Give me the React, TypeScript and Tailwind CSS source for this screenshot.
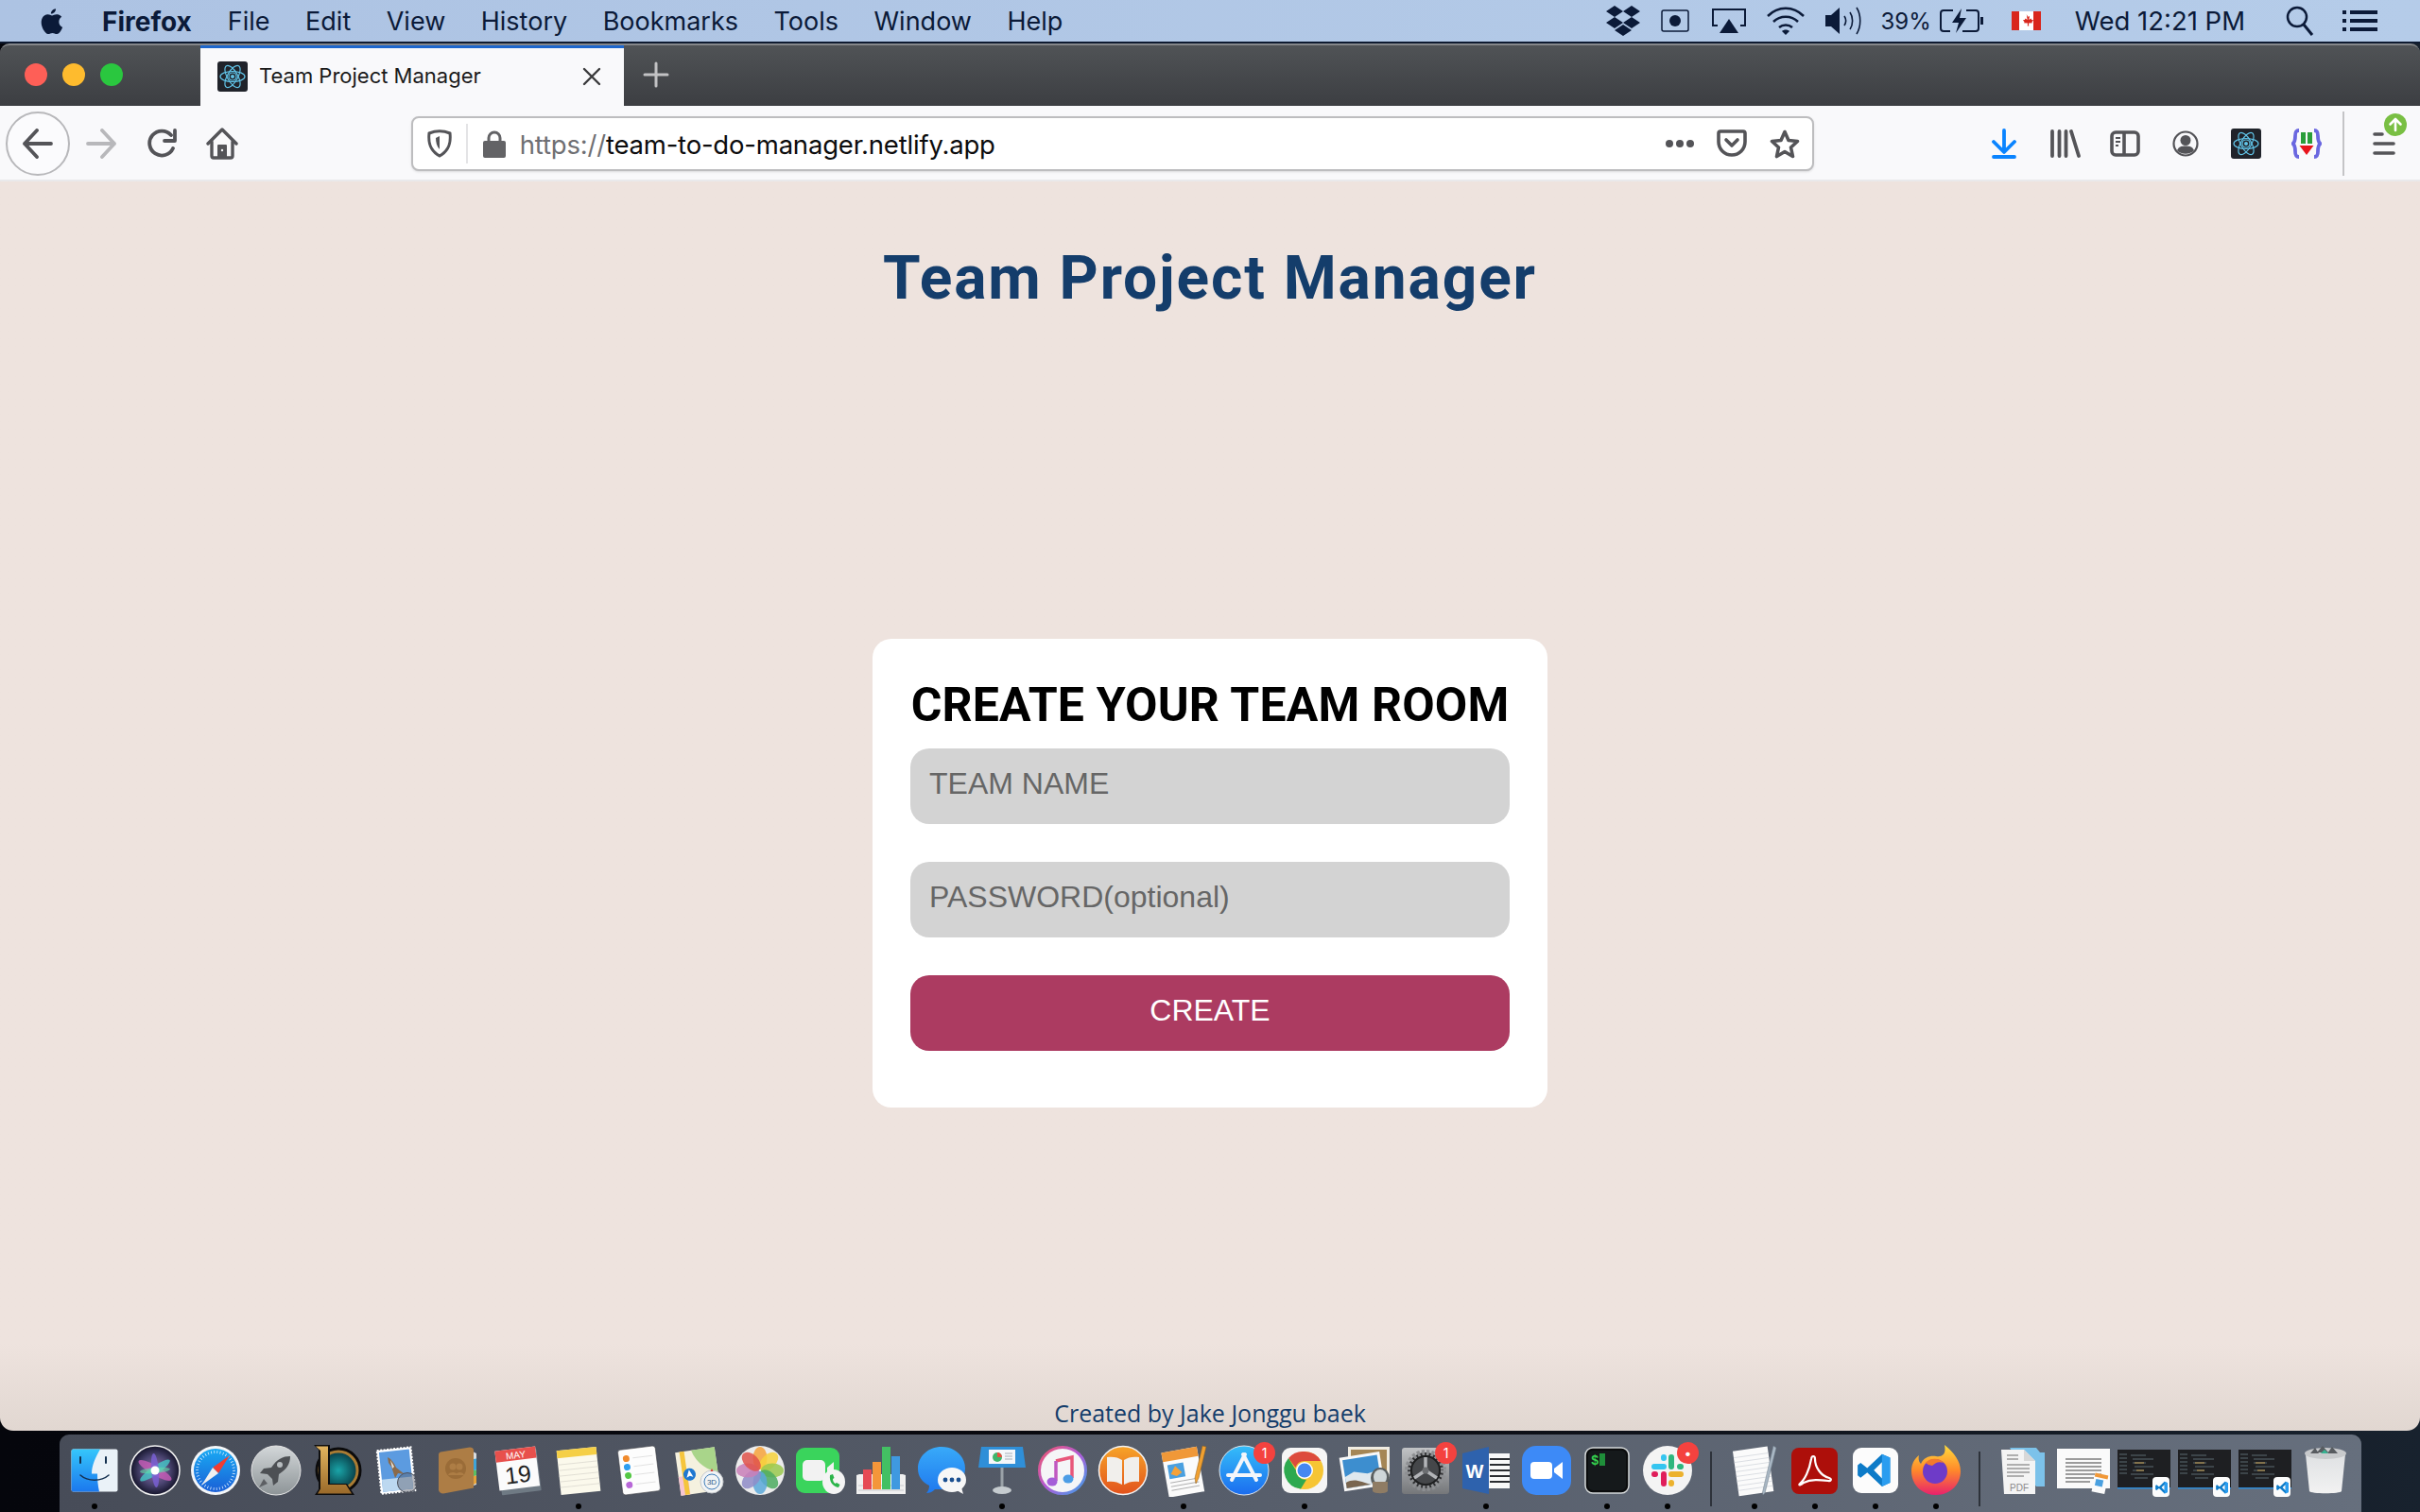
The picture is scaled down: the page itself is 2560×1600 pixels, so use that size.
import type { ReactNode } from "react";

// ---- menu bar icons ----
const Apple = () => (
  <svg width="27" height="31" viewBox="0 0 24 28" fill="#0b1a38">
    <path d="M17 2c.2 2.500-2 5-4.600 4.800C12.100 4.400 14.500 2.100 17 2zM20 14.500c0-2.600 1.700-4 2.600-4.700-1.500-2-3.600-2.400-4.500-2.400-1.900-.2-3.700 1.100-4.700 1.100-1 0-2.500-1.100-4.100-1-2.100 0-4 1.200-5.100 3.100-2.200 3.800-.6 9.400 1.600 12.500 1 1.500 2.300 3.200 3.900 3.100 1.600-.1 2.200-1 4.100-1s2.400 1 4.100 1c1.700 0 2.800-1.500 3.800-3 1.200-1.700 1.700-3.400 1.700-3.500-.1 0-3.400-1.300-3.400-5.200z" />
  </svg>
);

const MenuIcons = {
  dropbox: (
    <svg width="38" height="32" viewBox="0 0 38 32" fill="#0b1a38">
      <path d="M10 0l9 6-9 6-9-6zM28 0l9 6-9 6-9-6zM10 12l9 6-9 6-9-6zM28 12l9 6-9 6-9-6zM19 20l9 6-9 6-9-6z" />
    </svg>
  ),
  record: (
    <svg width="30" height="24" viewBox="0 0 30 24">
      <rect x="1" y="1" width="28" height="22" rx="2" fill="none" stroke="#0b1a38" strokeWidth="1.500" />
      <circle cx="15" cy="12" r="6" fill="#0b1a38" />
    </svg>
  ),
  airplay: (
    <svg width="38" height="28" viewBox="0 0 38 28" fill="none" stroke="#0b1a38" strokeWidth="2">
      <path d="M7 19H2V2h34v17h-5" />
      <path d="M19 12l10 15H9z" fill="#0b1a38" stroke="none" />
    </svg>
  ),
  wifi: (
    <svg width="42" height="32" viewBox="0 0 42 32" fill="none" stroke="#0b1a38" strokeWidth="2.500">
      <path d="M2 11c11-11 27-11 38 0M8 17c7-7 19-7 26 0M14 23c4-3.500 10-3.500 14 0" />
      <path d="M21 31l-4-4c2-2 6-2 8 0z" fill="#0b1a38" stroke="none" />
    </svg>
  ),
  volume: (
    <svg width="42" height="30" viewBox="0 0 42 30" fill="none" stroke="#0b1a38" strokeWidth="1.600">
      <path d="M1 9h6l9-8v28l-9-8H1z" fill="#0b1a38" stroke="none" />
      <path d="M21 10c2 3 2 7 0 10M27 6c3.500 5 3.500 13 0 18M34 1c5 8 5 20 0 28" />
    </svg>
  ),
  battery: (
    <svg width="46" height="26" viewBox="0 0 46 26" fill="none" stroke="#0b1a38" strokeWidth="2">
      <path d="M14 2H4a3 3 0 0 0-3 3v16a3 3 0 0 0 3 3h7M28 2h10a3 3 0 0 1 3 3v16a3 3 0 0 1-3 3H24" />
      <path d="M23 0L13 15h7l-3 11 11-16h-7z" fill="#0b1a38" stroke="none" />
      <rect x="43" y="9" width="3" height="8" fill="#0b1a38" stroke="none" />
    </svg>
  ),
  flag: (
    <svg width="31" height="20" viewBox="0 0 31 20">
      <rect width="31" height="20" fill="#fff" />
      <rect width="8" height="20" fill="#d9261c" />
      <rect x="23" width="8" height="20" fill="#d9261c" />
      <path d="M15.500 3l1.500 3 2-1-.7 4 2.200-1.500.6 1.500 2 .2-1.700 2 .6 1-4 .3.200 3h-1.400l.2-3-4-.3.600-1-1.700-2 2-.2.600-1.500 2.200 1.500-.7-4 2 1z" fill="#d9261c" />
    </svg>
  ),
  search: (
    <svg width="30" height="32" viewBox="0 0 30 32" fill="none" stroke="#0b1a38" strokeWidth="2.500">
      <circle cx="12" cy="12" r="10" />
      <path d="M19 20l9 11" strokeWidth="3" />
    </svg>
  ),
  list: (
    <svg width="37" height="24" viewBox="0 0 37 24" fill="#0b1a38">
      <rect y="1" width="4" height="4" /><rect x="8" y="1" width="29" height="4" />
      <rect y="10" width="4" height="4" /><rect x="8" y="10" width="29" height="4" />
      <rect y="19" width="4" height="4" /><rect x="8" y="19" width="29" height="4" />
    </svg>
  ),
};

// ---- favicon shared by tab and toolbar ----
const ReactLogo = ({ size }: { size: number }) => (
  <svg width={size} height={size} viewBox="0 0 32 32">
    <rect width="32" height="32" rx="3" fill="#20232a" />
    <g fill="none" stroke="#61c4e8" strokeWidth="1.200">
      <ellipse cx="16" cy="16" rx="13" ry="5.500" />
      <ellipse cx="16" cy="16" rx="13" ry="5.500" transform="rotate(60 16 16)" />
      <ellipse cx="16" cy="16" rx="13" ry="5.500" transform="rotate(120 16 16)" />
      <circle cx="16" cy="16" r="4" />
    </g>
    <circle cx="16" cy="16" r="2" fill="#61c4e8" />
  </svg>
);

// ---- toolbar icons ----
const ink = "#545458";
const Back = () => (
  <svg width="32" height="32" viewBox="0 0 32 32" fill="none" stroke={ink} strokeWidth="3.800" strokeLinecap="round" strokeLinejoin="round">
    <path d="M30 16H2M15 2L2 16l13 14" />
  </svg>
);
const Forward = () => (
  <svg width="32" height="32" viewBox="0 0 32 32" fill="none" stroke="#b8b8bb" strokeWidth="3.800" strokeLinecap="round" strokeLinejoin="round">
    <path d="M2 16h28M17 2l13 14-13 14" />
  </svg>
);
const Reload = () => (
  <svg width="32" height="32" viewBox="0 0 32 32" fill="none" stroke={ink} strokeWidth="3.800" strokeLinecap="round">
    <path d="M27 21a13 13 0 1 1-2-14" />
    <path d="M29 2v11H18" strokeLinejoin="round" />
  </svg>
);
const Home = () => (
  <svg width="34" height="34" viewBox="0 0 34 34" fill="none" stroke={ink} strokeWidth="3.400" strokeLinecap="round" strokeLinejoin="round">
    <path d="M2 17L17 2l15 15" />
    <path d="M6 15v15a2 2 0 0 0 2 2h18a2 2 0 0 0 2-2V15" />
    <rect x="12" y="18" width="10" height="14" rx="1" fill={ink} stroke="none" />
    <circle cx="17" cy="24" r="1.200" fill="#f9f9fb" stroke="none" />
  </svg>
);
const Shield = () => (
  <svg width="26" height="30" viewBox="0 0 26 30" fill="none" stroke={ink} strokeWidth="3">
    <path d="M2 4c7-3 15-3 22 0 1 9 0 18-11 24C2 22 1 13 2 4z" />
    <path d="M13 7v14c-3-3-4-8-4-12z" fill={ink} stroke="none" />
  </svg>
);
const Lock = () => (
  <svg width="24" height="29" viewBox="0 0 24 29" fill="#636366">
    <path d="M6 12V8a6 6 0 0 1 12 0v4" fill="none" stroke="#636366" strokeWidth="3" />
    <rect y="11" width="24" height="18" rx="2" />
  </svg>
);
const Pocket = () => (
  <svg width="32" height="30" viewBox="0 0 32 30" fill="none" stroke={ink} strokeWidth="3.600" strokeLinecap="round" strokeLinejoin="round">
    <path d="M4 2h24a2 2 0 0 1 2 2v9a14 14 0 0 1-28 0V4a2 2 0 0 1 2-2z" />
    <path d="M10 11l6 6 6-6" />
  </svg>
);
const Star = () => (
  <svg width="32" height="31" viewBox="0 0 32 31" fill="none" stroke={ink} strokeWidth="3.600" strokeLinejoin="round">
    <path d="M16 2.500l4 9 9.500 1-7 6.500 2 9.500-8.500-5-8.500 5 2-9.500-7-6.500 9.500-1z" />
  </svg>
);
const Download = () => (
  <svg width="26" height="32" viewBox="0 0 26 32" fill="none" stroke="#0a84ff" strokeWidth="3.800" strokeLinecap="round" strokeLinejoin="round">
    <path d="M13 2v22M2 14l11 11 11-11M2 30h22" />
  </svg>
);
const Library = () => (
  <svg width="32" height="30" viewBox="0 0 32 30" fill="none" stroke={ink} strokeWidth="3.800" strokeLinecap="round">
    <path d="M2 2v26M9.500 2v26M16.500 2v26M22 2l8 26" />
  </svg>
);
const Sidebar = () => (
  <svg width="32" height="28" viewBox="0 0 32 28" fill="none" stroke={ink} strokeWidth="3.600">
    <rect x="2" y="2" width="28" height="24" rx="4" />
    <path d="M15 2v24" />
    <path d="M6 8h5M6 12h5M6 16h3" strokeWidth="2" />
  </svg>
);
const Account = () => (
  <svg width="28" height="28" viewBox="0 0 28 28" fill={ink}>
    <circle cx="14" cy="14" r="12.500" fill="none" stroke={ink} strokeWidth="2.200" />
    <circle cx="14" cy="10.500" r="5.500" />
    <path d="M5 21c2-4 5-4.500 9-4.500s7 .5 9 4.500c-4 5-14 5-18 0z" />
  </svg>
);
const BracesExt = () => (
  <svg width="32" height="32" viewBox="0 0 32 32">
    <path d="M8 2C4 2 4 5 4 8s0 6-2.500 8c2.500 2 2.500 5 2.500 8s0 6 4 6M24 2c4 0 4 3 4 6s0 6 2.500 8c-2.500 2-2.500 5-2.500 8s0 6-4 6" fill="none" stroke="#6a67e0" strokeWidth="3.800" />
    <rect x="10" y="4" width="5" height="12" fill="#2a9d3a" />
    <rect x="17" y="4" width="5" height="12" fill="#2a9d3a" />
    <path d="M8.500 18h15l-7.500 10z" fill="#e8141c" />
  </svg>
);
const Hamburger = () => (
  <svg width="24" height="26" viewBox="0 0 24 26" fill="none" stroke={ink} strokeWidth="3.600" strokeLinecap="round">
    <path d="M2 3h8M2 13h20M2 23h20" />
  </svg>
);

// ---- dock icons, all drawn on a 56 box ----
const Box = ({ children }: { children: ReactNode }) => (
  <svg width="56" height="56" viewBox="0 0 56 56">{children}</svg>
);

const Finder = () => (
  <Box>
    <defs>
      <linearGradient id="fnd" x1="0" y1="0" x2="0" y2="1"><stop offset="0" stopColor="#35c6fb" /><stop offset="1" stopColor="#1b78ee" /></linearGradient>
    </defs>
    <rect x="3.500" y="5.500" width="49" height="45" rx="2" fill="#eaf2f8" />
    <path d="M5.500 5.500H34c-5 9-9 17-9 26h6c0 6 .5 12 2 19H5.500a2 2 0 0 1-2-2v-41a2 2 0 0 1 2-2z" fill="url(#fnd)" />
    <path d="M13 14v6M40 14v6" stroke="#14304f" strokeWidth="2" strokeLinecap="round" />
    <path d="M13 33c8 7 22 7 30 0" fill="none" stroke="#14304f" strokeWidth="1.600" strokeLinecap="round" />
  </Box>
);
const Siri = () => (
  <Box>
    <defs>
      <radialGradient id="sir"><stop offset="0" stopColor="#9a6fb0" /><stop offset="0.600" stopColor="#4a4470" /><stop offset="1" stopColor="#14142a" /></radialGradient>
    </defs>
    <circle cx="28" cy="28" r="26" fill="url(#sir)" stroke="#f2f2f2" strokeWidth="1.500" />
    <ellipse cx="28" cy="28" rx="20" ry="5" fill="#c85cb8" fillOpacity="0.800" transform="rotate(30 28 28)" />
    <ellipse cx="28" cy="28" rx="19" ry="4.500" fill="#45c8c8" fillOpacity="0.800" transform="rotate(-35 28 28)" />
    <ellipse cx="28" cy="28" rx="18" ry="4" fill="#7a60d8" fillOpacity="0.800" transform="rotate(85 28 28)" />
    <ellipse cx="28" cy="28" rx="16" ry="3" fill="#5fe0a8" fillOpacity="0.600" transform="rotate(-5 28 28)" />
    <circle cx="28" cy="28" r="4.500" fill="#fff" />
  </Box>
);
const Safari = () => (
  <Box>
    <defs>
      <linearGradient id="saf" x1="0" y1="0" x2="0" y2="1"><stop offset="0" stopColor="#19aaf3" /><stop offset="1" stopColor="#1a5fd6" /></linearGradient>
    </defs>
    <circle cx="28" cy="28" r="26" fill="#f4f6f8" />
    <circle cx="28" cy="28" r="23" fill="url(#saf)" />
    <circle cx="28" cy="28" r="19.500" fill="none" stroke="#dbeeff" strokeWidth="3" strokeDasharray="0.800 2.400" />
    <path d="M43 12L31 31l-6-6z" fill="#f03c32" />
    <path d="M13 44l12-19 6 6z" fill="#f0f0f0" />
  </Box>
);
const Launchpad = () => (
  <Box>
    <defs>
      <linearGradient id="lpd" x1="0" y1="0" x2="0" y2="1"><stop offset="0" stopColor="#d3d7d9" /><stop offset="1" stopColor="#8d9497" /></linearGradient>
    </defs>
    <circle cx="28" cy="28" r="26" fill="url(#lpd)" stroke="#e6e6e6" />
    <path d="M43 13c-8 0-14 3-20 12l-8 1-4 5 8 1 5 5 1 7 5-4 1-8c8-5 12-11 12-19z" fill="#4d5054" />
    <circle cx="32" cy="22" r="3" fill="#b7bcbf" />
    <path d="M15 37l-5 9 9-4z" fill="#5c5f63" />
  </Box>
);
const Lol = () => (
  <Box>
    <defs>
      <radialGradient id="lol"><stop offset="0" stopColor="#1aa4a8" /><stop offset="1" stopColor="#06323c" /></radialGradient>
      <linearGradient id="lolg" x1="0" y1="0" x2="0" y2="1"><stop offset="0" stopColor="#e2b45e" /><stop offset="1" stopColor="#9b6a2a" /></linearGradient>
    </defs>
    <circle cx="30" cy="28" r="22" fill="url(#lol)" stroke="#0b0b0c" strokeWidth="5" />
    <circle cx="30" cy="28" r="20" fill="none" stroke="#a97c34" strokeWidth="3" />
    <path d="M4 1h17v41h18l8 12H5l4-6V6z" fill="#0e0e0f" />
    <path d="M6 2.500h13v40.500h19l6 9.500H8l3-5V7z" fill="url(#lolg)" />
  </Box>
);
const MailStamp = () => (
  <Box>
    <g transform="rotate(-6 28 28)">
      <rect x="9" y="5" width="36" height="46" fill="#fff" stroke="#fff" strokeWidth="2" strokeDasharray="2 1.500" />
      <rect x="11" y="7" width="32" height="42" fill="#5c9be0" />
      <rect x="11" y="36" width="32" height="13" fill="#bcd8f0" />
    </g>
    <path d="M18 14c4 2 7 6 9 11l9 7-7-1-3 5-4-12-3-4z" fill="#8a6a4a" />
    <path d="M21 17l4 7-2 2z" fill="#e9e2d6" />
    <circle cx="39" cy="41" r="10.500" fill="#5a606c" fillOpacity="0.450" stroke="#4c515c" />
  </Box>
);
const Contacts = () => (
  <Box>
    <path d="M44 8l4 2v33l-3 1z" fill="#d8dce0" />
    <path d="M45 16l3-.5v6l-3 .5zM45 22l3-.5v6l-3 .5z" fill="#3fa4d8" />
    <path d="M45 28l3-.5v6l-3 .5z" fill="#5bbf63" />
    <path d="M45 34l3-.5v8l-3 1.500z" fill="#e5a23a" />
    <path d="M8 11c0-1 1-2 2-2.500l31-5c2 0 4 1 4 3v40l-32 6c-3 0-5-2-5-4z" fill="#ad7d45" />
    <circle cx="26" cy="26" r="11" fill="#9a6c38" />
    <circle cx="23" cy="24" r="3.500" fill="#ad7d45" /><circle cx="30" cy="24" r="3.500" fill="#ad7d45" />
    <path d="M18 33c1-4 9-4 10 0zM26 33c1-4 8-4 9 0z" fill="#ad7d45" />
  </Box>
);
const Calendar = () => (
  <Box>
    <g transform="rotate(-7 28 28)">
      <rect x="8" y="8" width="42" height="44" rx="1" fill="#6f7a84" />
      <rect x="6" y="5" width="43" height="42" fill="#fbfbfb" />
      <rect x="6" y="5" width="43" height="12" fill="#e8504c" />
      <text x="27.500" y="15" textAnchor="middle" fontFamily="'Liberation Sans', sans-serif" fontSize="10" fill="#fff">MAY</text>
      <text x="27.500" y="41" textAnchor="middle" fontFamily="'Liberation Sans', sans-serif" fontSize="25" fill="#222">19</text>
    </g>
  </Box>
);
const Notes = () => (
  <Box>
    <g transform="rotate(-6 28 28)">
      <rect x="7" y="5" width="42" height="47" fill="#fbf9ec" />
      <rect x="7" y="5" width="42" height="8" fill="#f5cf46" />
      <path d="M7 20h42M7 26h42M7 32h42M7 38h42M7 44h42" stroke="#dcdad0" strokeWidth="0.800" />
    </g>
  </Box>
);
const Reminders = () => (
  <Box>
    <g transform="rotate(-7 28 28)">
      <rect x="8" y="4" width="40" height="48" rx="3" fill="#fdfdfd" stroke="#3f4248" strokeWidth="0.600" />
      <circle cx="16" cy="14" r="3.500" fill="#f08a2c" /><circle cx="16" cy="23" r="3.500" fill="#2d9ef0" />
      <circle cx="16" cy="32" r="3.500" fill="#55c845" /><circle cx="16" cy="42" r="3.500" fill="#b868d8" />
      <path d="M23 14h21M23 23h21M23 32h21M23 42h21" stroke="#e2e2e2" />
    </g>
  </Box>
);
const Maps = () => (
  <Box>
    <g transform="rotate(-8 26 28)">
      <rect x="5" y="6" width="42" height="46" fill="#f5f1df" />
      <path d="M22 6h25v26C38 30 26 22 22 6z" fill="#a9d58a" />
      <path d="M5 32h10v20H5z" fill="#f7c6d1" />
      <path d="M12 6v46" stroke="#f5c53c" strokeWidth="5" />
      <circle cx="17" cy="31" r="6.500" fill="#1f78d1" />
      <path d="M17 26l3.500 8-3.500-1.500-3.500 1.500z" fill="#fff" />
    </g>
    <circle cx="41" cy="40" r="12" fill="#f2f4f5" stroke="#c4c8cc" />
    <circle cx="41" cy="40" r="8" fill="none" stroke="#3e7cb8" />
    <text x="41" y="43" textAnchor="middle" fontFamily="'Liberation Sans', sans-serif" fontSize="8" fill="#2f5d8a">3D</text>
    <path d="M41 26l1.500 3h-3z" fill="#d9362e" />
  </Box>
);
const Photos = () => {
  const petals = ["#f7a33c", "#f7d23c", "#9ac94e", "#4cab60", "#5ba8d9", "#8f8cc8", "#c97fb8", "#e0524a"];
  return (
    <Box>
      <circle cx="28" cy="28" r="26" fill="#ececec" />
      {petals.map((c, i) => (
        <ellipse key={c} cx="28" cy="15" rx="7.500" ry="12" fill={c} fillOpacity="0.850" transform={`rotate(${i * 45} 28 28)`} />
      ))}
    </Box>
  );
};
const FaceTime = () => (
  <Box>
    <rect x="2" y="4" width="46" height="48" rx="9" fill="#3ad45c" />
    <rect x="9" y="17" width="24" height="22" rx="5" fill="#f2f2f2" />
    <path d="M35 25l7-6v18l-7-6z" fill="#f2f2f2" />
    <ellipse cx="42" cy="40" rx="12" ry="13" fill="#f4f4f4" />
    <path d="M38 33c-1 7 3 12 9 13l1.500-3-3.500-2-1.500 1c-1.500-1-2.500-3-2.500-5l1.500-1-1.500-4z" fill="#2bb54a" />
  </Box>
);
const Numbers = () => (
  <Box>
    <path d="M2 33l3-1h46l3 1v20H2z" fill="#f0f0f0" />
    <path d="M4 44h48M4 49h48" stroke="#b0b4b8" strokeWidth="0.600" />
    <rect x="9" y="27" width="9" height="21" fill="#e64a55" />
    <rect x="19" y="19" width="9" height="29" fill="#f4963a" />
    <rect x="29" y="3" width="9" height="45" fill="#43c063" />
    <rect x="39" y="13" width="9" height="35" fill="#3f99e0" />
  </Box>
);
const Messages = () => (
  <Box>
    <defs>
      <linearGradient id="msg" x1="0" y1="0" x2="0" y2="1"><stop offset="0" stopColor="#38aaf9" /><stop offset="1" stopColor="#1f78ee" /></linearGradient>
    </defs>
    <path d="M28 3c14 0 25 10 25 23s-11 22-25 22c-3 0-5 0-7 0-3 3-6 4-9 4 2-2 3-5 3-8C7 40 3 34 3 26 3 13 14 3 28 3z" fill="url(#msg)" />
    <ellipse cx="39" cy="38" rx="15" ry="13" fill="#f7f7f7" />
    <path d="M44 49l7 4-2-7z" fill="#f7f7f7" />
    <circle cx="32" cy="38" r="2.400" fill="#1a4f90" /><circle cx="39" cy="38" r="2.400" fill="#1a4f90" /><circle cx="46" cy="38" r="2.400" fill="#1a4f90" />
  </Box>
);
const Keynote = () => (
  <Box>
    <path d="M6 3h44l3 22H3z" fill="#2f8fd8" />
    <rect x="14" y="6" width="28" height="15" fill="#f5f7fa" />
    <circle cx="23" cy="14" r="5" fill="#3fb56c" />
    <path d="M23 14V9a5 5 0 0 1 5 5z" fill="#e8503f" />
    <path d="M31 10h8M31 13h8M31 16h8" stroke="#a4adb5" />
    <rect x="26.500" y="25" width="3" height="22" fill="#9aa2a8" />
    <ellipse cx="28" cy="49" rx="10" ry="4" fill="#c5cbcf" />
  </Box>
);
const Itunes = () => (
  <Box>
    <defs>
      <linearGradient id="itn" x1="0" y1="0" x2="1" y2="1"><stop offset="0" stopColor="#f2566b" /><stop offset="0.500" stopColor="#b25ad8" /><stop offset="1" stopColor="#39a4ea" /></linearGradient>
    </defs>
    <circle cx="28" cy="28" r="24.500" fill="#f5f5f7" stroke="url(#itn)" strokeWidth="3" />
    <path d="M21 18l17-4v22" fill="none" stroke="#e8567a" strokeWidth="3.500" />
    <path d="M21 18v21" fill="none" stroke="#c058c0" strokeWidth="3.500" />
    <ellipse cx="17" cy="40" rx="5.500" ry="4.500" fill="#a45ed8" />
    <ellipse cx="34" cy="37" rx="5.500" ry="4.500" fill="#4c9de6" />
  </Box>
);
const Books = () => (
  <Box>
    <defs>
      <linearGradient id="bks" x1="0" y1="0" x2="0" y2="1"><stop offset="0" stopColor="#f7a428" /><stop offset="1" stopColor="#e2521c" /></linearGradient>
    </defs>
    <circle cx="28" cy="28" r="25.500" fill="url(#bks)" stroke="#f4f4f4" strokeWidth="1.500" />
    <path d="M27 17c-4-3-10-4-16-3v26c6-1 11 0 16 3zM29 17c4-3 10-4 16-3v26c-6-1-11 0-16 3z" fill="#f1efec" />
  </Box>
);
const Pages = () => (
  <Box>
    <g transform="rotate(-10 26 28)">
      <rect x="8" y="6" width="38" height="48" fill="#fbfbfb" />
      <rect x="8" y="6" width="38" height="10" fill="#f09838" />
      <rect x="12" y="20" width="17" height="15" fill="#4aa0e0" />
      <path d="M20 22l6 8-6 3-6-3z" fill="#f4a23a" />
      <path d="M12 39h30M12 43h30M12 47h30" stroke="#b0b0b0" />
    </g>
    <path d="M52 3l-8 33-3 6-1-6 8-34z" fill="#f0a030" stroke="#8a5c1c" strokeWidth="0.500" />
  </Box>
);
const AppStore = () => (
  <Box>
    <defs>
      <linearGradient id="aps" x1="0" y1="0" x2="0" y2="1"><stop offset="0" stopColor="#35bdf9" /><stop offset="1" stopColor="#1b6cef" /></linearGradient>
    </defs>
    <circle cx="28" cy="28" r="26" fill="url(#aps)" stroke="#dfe6ec" />
    <path d="M29 11L15 38M27 11l14 27M11 33h34" fill="none" stroke="#f4f6fa" strokeWidth="4" strokeLinecap="round" />
  </Box>
);
const Chrome = () => (
  <Box>
    <rect x="4" y="4" width="48" height="48" rx="9" fill="#f5f5f5" />
    <circle cx="28" cy="28" r="20" fill="#f6c534" />
    <path d="M28 8a20 20 0 0 1 17.300 10H28a10 10 0 0 0-9.500 7L11 15a20 20 0 0 1 17-7z" fill="#dd4b3d" />
    <path d="M11 15l8 13a10 10 0 0 0 11 9.800L24 47.600A20 20 0 0 1 11 15z" fill="#2da94f" />
    <circle cx="28" cy="28" r="9" fill="#fff" />
    <circle cx="28" cy="28" r="7.500" fill="#4688f1" />
  </Box>
);
const Preview = () => (
  <Box>
    <rect x="10" y="3" width="44" height="34" fill="#f0ece2" />
    <rect x="13" y="6" width="38" height="28" fill="#a58655" />
    <g transform="rotate(-9 26 28)">
      <rect x="3" y="11" width="43" height="36" fill="#f8f8f8" />
      <rect x="6" y="14" width="37" height="30" fill="#3d8ecf" />
      <path d="M6 32l10-4 14 4 13-2v14H6z" fill="#dfe8ee" />
      <path d="M6 38c10-4 16 2 26 6H6z" fill="#7a6650" />
    </g>
    <ellipse cx="44" cy="36" rx="10" ry="11" fill="#5a5f60" />
    <ellipse cx="44" cy="35" rx="7" ry="8" fill="#cfd6d8" />
    <path d="M36 40h16v10c-2 3-14 3-16 0z" fill="#8f7c64" />
  </Box>
);
const SysPrefs = () => (
  <Box>
    <defs>
      <linearGradient id="spf" x1="0" y1="0" x2="0" y2="1"><stop offset="0" stopColor="#c1c3c5" /><stop offset="1" stopColor="#75777a" /></linearGradient>
    </defs>
    <rect x="3" y="4" width="50" height="49" rx="3" fill="url(#spf)" />
    <circle cx="28" cy="28" r="19" fill="#2f3032" stroke="#8d8f92" strokeWidth="6" strokeDasharray="3 2" />
    <circle cx="28" cy="28" r="15" fill="#45474a" stroke="#1e1f20" strokeWidth="2" />
    <path d="M28 28V14M28 28L16 36M28 28l12 8" stroke="#b3b5b8" strokeWidth="3.500" />
    <circle cx="28" cy="28" r="3.500" fill="#6c6e71" />
  </Box>
);
const Word = () => (
  <Box>
    <rect x="26" y="10" width="27" height="37" fill="#f8f8f8" />
    <path d="M32 16h21M32 22h21M32 28h21M32 34h21M32 40h21" stroke="#2a2c30" strokeWidth="2" />
    <path d="M3 10L31 3v50L3 47z" fill="#2e62ad" />
    <text x="16" y="36" textAnchor="middle" fontFamily="'Liberation Sans', sans-serif" fontWeight="700" fontSize="20" fill="#fff">W</text>
  </Box>
);
const ZoomApp = () => (
  <Box>
    <rect x="2" y="2" width="52" height="52" rx="15" fill="#3d8af7" />
    <rect x="11" y="19" width="23" height="18" rx="4" fill="#fff" />
    <path d="M36 26l9-7v18l-9-7z" fill="#fff" />
  </Box>
);
const Terminal = () => (
  <Box>
    <rect x="5" y="4" width="46" height="48" rx="8" fill="#0b0c0d" stroke="#d5d9da" strokeWidth="1.500" />
    <rect x="8" y="7" width="40" height="42" rx="5" fill="#15191b" />
    <text x="11" y="22" fontFamily="'Liberation Mono', monospace" fontWeight="700" fontSize="14" fill="#35d04f">$</text>
    <rect x="20" y="10" width="6" height="13" fill="#1f8f3a" />
  </Box>
);
const Slack = () => (
  <Box>
    <circle cx="28" cy="28" r="26" fill="#f4f4f4" />
    <g strokeWidth="6" strokeLinecap="round" fill="none">
      <path d="M14 24h10M24 14v1" stroke="#35c5f0" />
      <path d="M32 14v10M42 24h-1" stroke="#2eb67d" />
      <path d="M42 32H32M32 42v-1" stroke="#ecb22e" />
      <path d="M24 42V32M14 32h1" stroke="#e01e5a" />
    </g>
  </Box>
);
const TextEdit = () => (
  <Box>
    <g transform="rotate(-8 26 28)">
      <rect x="8" y="5" width="37" height="48" fill="#fbfbfb" />
      <path d="M8 12h37M8 17h37M8 22h37M8 27h37M8 32h37M8 37h37M8 42h37M8 47h37" stroke="#d0d4da" strokeWidth="0.700" />
    </g>
    <path d="M48 2l3 2-12 48-2 2-.5-3z" fill="#a9b7c4" stroke="#6d7a86" strokeWidth="0.500" />
  </Box>
);
const Acrobat = () => (
  <Box>
    <rect x="3" y="4" width="49" height="49" rx="8" fill="#ad0f0a" />
    <path d="M12 42c5-4 10-14 12-26 .5-4 4-4 4 0 0 8 6 18 15 20 3 1 2 4-1 3-9-1-18-2-26 2-3 3-6 3-4 1z" fill="none" stroke="#fff" strokeWidth="2.200" />
  </Box>
);
const VsCodeGlyph = () => (
  <>
    <path d="M37 6l11 5v34l-11 5-20-19-9 7-4-3v-14l4-3 9 7zM37 17l-11 11 11 11z" fill="#0d7bc8" fillRule="evenodd" />
    <path d="M37 6l11 5v34l-11 5z" fill="#2a9df0" />
  </>
);
const VsCode = () => (
  <Box>
    <rect x="4" y="4" width="48" height="48" rx="9" fill="#fcfcfc" />
    <g transform="translate(6 6) scale(0.780)"><VsCodeGlyph /></g>
  </Box>
);
const FirefoxApp = () => (
  <Box>
    <defs>
      <linearGradient id="ffx" x1="0" y1="0" x2="0" y2="1"><stop offset="0" stopColor="#ffdc3c" /><stop offset="0.500" stopColor="#ff8a2a" /><stop offset="1" stopColor="#e8216c" /></linearGradient>
    </defs>
    <path d="M37 1c10 8 17 17 17 28 0 14-11 25-26 25S2 43 2 29c0-8 3-13 8-17-1 4 0 7 2 9 3-7 10-9 16-8 7 1 11-2 9-12z" fill="url(#ffx)" />
    <circle cx="27" cy="29" r="13" fill="#6e3bc8" />
    <path d="M17 20c4-5 14-6 19 0-6-2-8 0-12 3l-4-1z" fill="#f27a2c" />
  </Box>
);
const PdfStack = () => (
  <Box>
    <path d="M14 4h28l4 5h5v36H42z" fill="#7cc2ea" />
    <path d="M5 6h24l12 12v35H8z" fill="#f4f4f4" />
    <path d="M29 6l12 12H29z" fill="#d8d8d8" />
    <path d="M11 12h12M11 16h12M11 22h24M11 26h24M11 30h24M11 34h18" stroke="#6b6b6b" strokeWidth="1.200" />
    <text x="24" y="50" textAnchor="middle" fontFamily="'Liberation Sans', sans-serif" fontSize="10" fill="#8a8a8a">PDF</text>
  </Box>
);
const DocThumb = () => (
  <Box>
    <rect x="0" y="5" width="56" height="42" fill="#fafafa" />
    <path d="M9 16h38M9 20h38M9 24h38M9 28h38M9 32h38M9 36h30M9 40h26" stroke="#7d7d7d" strokeWidth="1.400" />
    <g transform="rotate(12 46 44)">
      <rect x="38" y="32" width="14" height="20" fill="#fbfbfb" />
      <rect x="38" y="32" width="14" height="4" fill="#f09838" />
      <rect x="40" y="38" width="8" height="7" fill="#4aa0e0" />
    </g>
  </Box>
);
const CodeThumb = () => (
  <Box>
    <rect x="0" y="6" width="56" height="40" fill="#1e1f22" />
    <rect x="0" y="46" width="56" height="1.500" fill="#2e8bd8" />
    <path d="M2 11h8M2 15h8M2 19h8M2 23h8M2 27h8M2 31h8M14 12h16M16 16h22M16 20h14M18 24h20M16 28h12M14 32h24M18 36h14" stroke="#5a6a70" strokeWidth="1" />
    <path d="M18 20h10M20 28h8" stroke="#c8a050" strokeWidth="1" />
    <rect x="37" y="35" width="18" height="21" rx="4" fill="#fcfcfc" />
    <g transform="translate(39 38) scale(0.290)"><VsCodeGlyph /></g>
  </Box>
);
const Trash = () => (
  <Box>
    <defs>
      <linearGradient id="trs" x1="0" y1="0" x2="0" y2="1"><stop offset="0" stopColor="#dfe1e3" /><stop offset="1" stopColor="#f2f2f2" /></linearGradient>
    </defs>
    <path d="M7 11h42l-4 39c-1 3-33 3-34 0z" fill="url(#trs)" />
    <ellipse cx="28" cy="10" rx="22" ry="6" fill="#c8cacc" />
    <path d="M12 10l5-6 4 6zM19 9l6-7 6 7zM30 10l5-7 6 7z" fill="#585c60" />
    <path d="M23 10l4-4 4 4z" fill="#36b392" />
  </Box>
);

type DockEntry = { key: string; icon?: ReactNode; dot?: boolean; badge?: string };

const dockApps: DockEntry[] = [
  { key: "finder", icon: <Finder />, dot: true },
  { key: "siri", icon: <Siri /> },
  { key: "safari", icon: <Safari /> },
  { key: "launchpad", icon: <Launchpad /> },
  { key: "lol", icon: <Lol /> },
  { key: "mail", icon: <MailStamp /> },
  { key: "contacts", icon: <Contacts /> },
  { key: "calendar", icon: <Calendar /> },
  { key: "notes", icon: <Notes />, dot: true },
  { key: "reminders", icon: <Reminders /> },
  { key: "maps", icon: <Maps /> },
  { key: "photos", icon: <Photos /> },
  { key: "facetime", icon: <FaceTime /> },
  { key: "numbers", icon: <Numbers /> },
  { key: "messages", icon: <Messages /> },
  { key: "keynote", icon: <Keynote />, dot: true },
  { key: "itunes", icon: <Itunes /> },
  { key: "books", icon: <Books /> },
  { key: "pages", icon: <Pages />, dot: true },
  { key: "appstore", icon: <AppStore />, badge: "1" },
  { key: "chrome", icon: <Chrome />, dot: true },
  { key: "preview", icon: <Preview /> },
  { key: "prefs", icon: <SysPrefs />, badge: "1" },
  { key: "word", icon: <Word />, dot: true },
  { key: "zoom", icon: <ZoomApp /> },
  { key: "terminal", icon: <Terminal />, dot: true },
  { key: "slack", icon: <Slack />, dot: true, badge: "•" },
  { key: "sep1" },
  { key: "textedit", icon: <TextEdit />, dot: true },
  { key: "acrobat", icon: <Acrobat />, dot: true },
  { key: "vscode", icon: <VsCode />, dot: true },
  { key: "firefox", icon: <FirefoxApp />, dot: true },
  { key: "sep2" },
  { key: "pdfs", icon: <PdfStack /> },
  { key: "doc", icon: <DocThumb /> },
  { key: "code1", icon: <CodeThumb /> },
  { key: "code2", icon: <CodeThumb /> },
  { key: "code3", icon: <CodeThumb /> },
  { key: "trash", icon: <Trash /> },
];

const menus = ["File", "Edit", "View", "History", "Bookmarks", "Tools", "Window", "Help"];

export default function App() {
  return (
    <div className="flex h-[1600px] w-[2560px] flex-col overflow-hidden bg-linear-to-r from-[#05060c] via-[#0a0a10] to-[#18222e] font-['Inter',sans-serif]">
      {/* mac menu bar */}
      <div className="flex h-[46px] shrink-0 items-center border-b-2 border-[#0e1a30] bg-linear-to-r from-[#adc3e3] to-[#b5cce9] pr-[45px] pl-[40px] text-[27px] text-[#0b1a38]">
        <Apple />
        <span className="ml-[41px] pt-[2px] text-[28px] font-bold">Firefox</span>
        <div className="ml-[38px] flex gap-[37.5px] pt-[2px]">
          {menus.map((m) => (
            <span key={m}>{m}</span>
          ))}
        </div>
        <div className="ml-auto flex items-center">
          {MenuIcons.dropbox}
          <span className="ml-[21px] flex">{MenuIcons.record}</span>
          <span className="ml-[23px] flex">{MenuIcons.airplay}</span>
          <span className="ml-[20px] flex">{MenuIcons.wifi}</span>
          <span className="ml-[20px] flex">{MenuIcons.volume}</span>
          <span className="ml-[17px] pt-[2px] text-[24px]">39%</span>
          <span className="ml-[9px] flex">{MenuIcons.battery}</span>
          <span className="ml-[30px] flex">{MenuIcons.flag}</span>
          <span className="ml-[36px] pt-[2px] text-[27.5px]">Wed 12:21 PM</span>
          <span className="ml-[43px] flex">{MenuIcons.search}</span>
          <span className="ml-[30px] flex">{MenuIcons.list}</span>
        </div>
      </div>

      {/* browser window */}
      <div className="flex min-h-0 flex-1 flex-col overflow-hidden rounded-b-[14px]">
        <div className="flex h-[66px] shrink-0 rounded-t-[10px] border-t-2 border-[#85878a] bg-linear-to-b from-[#505356] to-[#3c3e42]">
          <div className="flex w-[212px] items-center gap-[16px] pb-[2px] pl-[26px]">
            <span className="h-[24px] w-[24px] rounded-full bg-[#fe5f57]" />
            <span className="h-[24px] w-[24px] rounded-full bg-[#febb2e]" />
            <span className="h-[24px] w-[24px] rounded-full bg-[#2ac73f]" />
          </div>
          <div className="flex w-[448px] items-center border-t-[3px] border-[#1d66cc] bg-[#f9f9fb] pr-[24px] pb-[2px] pl-[18px]">
            <ReactLogo size={32} />
            <span className="ml-[12px] text-[22px] text-[#1a1a1a]">Team Project Manager</span>
            <svg className="ml-auto" width="20" height="20" viewBox="0 0 20 20" stroke="#3a3a3c" strokeWidth="2.400" strokeLinecap="round">
              <path d="M2 2l16 16M18 2L2 18" />
            </svg>
          </div>
          <div className="flex items-center pb-[2px] pl-[20px]">
            <svg width="28" height="28" viewBox="0 0 28 28" stroke="#c2c2c4" strokeWidth="3" strokeLinecap="round">
              <path d="M14 2v24M2 14h24" />
            </svg>
          </div>
        </div>

        <div className="flex h-[80px] shrink-0 items-center border-b-2 border-[#e9e9eb] bg-[#f9f9fb] pt-[2px] pr-[26px] pl-[6px]">
          <button className="flex h-[68px] w-[68px] items-center justify-center rounded-full border-2 border-[#b8b8bb] bg-[#fbfbfd]">
            <Back />
          </button>
          <span className="ml-[17px] flex"><Forward /></span>
          <span className="ml-[33px] flex"><Reload /></span>
          <span className="ml-[30px] flex"><Home /></span>
          <div className="ml-[183px] flex h-[58px] w-[1489px] items-center rounded-[8px] border-2 border-[#bdbdbf] bg-white pr-[13px] pl-[15px] shadow-sm">
            <Shield />
            <span className="ml-[15px] h-[42px] w-[2px] bg-[#e4e4e6]" />
            <span className="ml-[16px] flex"><Lock /></span>
            <span className="ml-[15px] pt-[3px] text-[27.5px] tracking-[-0.2px] text-[#0c0c0d]">
              <span className="text-[#6f6f73]">https://</span>team-to-do-manager.netlify.app
            </span>
            <div className="ml-auto flex items-center">
              <span className="flex gap-[3px]">
                <span className="h-[8px] w-[8px] rounded-full bg-[#545458]" />
                <span className="h-[8px] w-[8px] rounded-full bg-[#545458]" />
                <span className="h-[8px] w-[8px] rounded-full bg-[#545458]" />
              </span>
              <span className="ml-[24px] flex"><Pocket /></span>
              <span className="ml-[24px] flex"><Star /></span>
            </div>
          </div>
          <span className="ml-[188px] flex"><Download /></span>
          <span className="ml-[36px] flex"><Library /></span>
          <span className="ml-[31px] flex"><Sidebar /></span>
          <span className="ml-[34px] flex"><Account /></span>
          <span className="ml-[34px] flex"><ReactLogo size={32} /></span>
          <span className="ml-[32px] flex"><BracesExt /></span>
          <span className="ml-[22px] h-[68px] w-[2px] bg-[#c4c4c6]" />
          <span className="relative ml-[30px] flex">
            <Hamburger />
            <span className="absolute -top-[19px] left-[12px] flex h-[24px] w-[24px] items-center justify-center rounded-full bg-[#79bf43]">
              <svg width="16" height="16" viewBox="0 0 16 16" fill="none" stroke="#fff" strokeWidth="2.600" strokeLinecap="round" strokeLinejoin="round">
                <path d="M8 14V2M2.500 7.500L8 2l5.500 5.500" />
              </svg>
            </span>
          </span>
        </div>

        {/* page */}
        <div className="flex min-h-0 flex-1 flex-col items-center bg-linear-to-b from-[#eee3de] from-[93%] to-[#e1d7d1] pt-[73px]">
          <h1 className="font-['Roboto',sans-serif] text-[64px] leading-[60px] font-bold tracking-[1.9px] text-[#143d6b]">
            Team Project Manager
          </h1>
          <div className="mt-[351px] flex h-[496px] w-[714px] flex-col rounded-[20px] bg-white px-[40px] pt-[45px]">
            <h2 className="h-[71px] text-center font-['Roboto',sans-serif] text-[50px] leading-[50px] font-bold tracking-[0.15px] whitespace-nowrap text-black">
              CREATE YOUR TEAM ROOM
            </h2>
            <input
              placeholder="TEAM NAME"
              className="h-[80px] w-full rounded-[20px] bg-[#d3d3d3] px-[20px] pb-[5px] font-['Liberation_Sans',sans-serif] text-[32px] outline-none placeholder:text-[#666]"
            />
            <input
              placeholder="PASSWORD(optional)"
              className="mt-[40px] h-[80px] w-full rounded-[20px] bg-[#d3d3d3] px-[20px] pb-[5px] font-['Liberation_Sans',sans-serif] text-[32px] outline-none placeholder:text-[#666]"
            />
            <button className="mt-[40px] h-[80px] w-full rounded-[20px] bg-[#ac3b61] pb-[6px] font-['Liberation_Sans',sans-serif] text-[32px] text-white">
              CREATE
            </button>
          </div>
          <p className="mt-auto pb-[1px] font-['Open_Sans',sans-serif] text-[25px] leading-[36px] text-[#143d6b]">
            Created by Jake Jonggu baek
          </p>
        </div>
      </div>

      {/* dock */}
      <div className="mt-[4px] ml-[63px] flex h-[82px] w-[2435px] shrink-0 rounded-t-[10px] bg-linear-to-r from-[#474c58] to-[#666f7d] pt-[10px] pl-[5px]">
        {dockApps.map((app) =>
          app.icon ? (
            <div key={app.key} className="relative flex w-[64px] flex-col items-center">
              {app.icon}
              {app.badge && (
                <span className="absolute -top-[2px] left-[42px] flex h-[23px] w-[23px] items-center justify-center rounded-full bg-[#f4423f] text-[14px] text-white">
                  {app.badge}
                </span>
              )}
              {app.dot && <span className="mt-[7px] h-[6px] w-[6px] rounded-full bg-black" />}
            </div>
          ) : (
            <div key={app.key} className="flex w-[28px] justify-center pt-[8px]">
              <span className="h-[58px] w-[2px] bg-[#2d323a]" />
            </div>
          ),
        )}
      </div>
    </div>
  );
}
